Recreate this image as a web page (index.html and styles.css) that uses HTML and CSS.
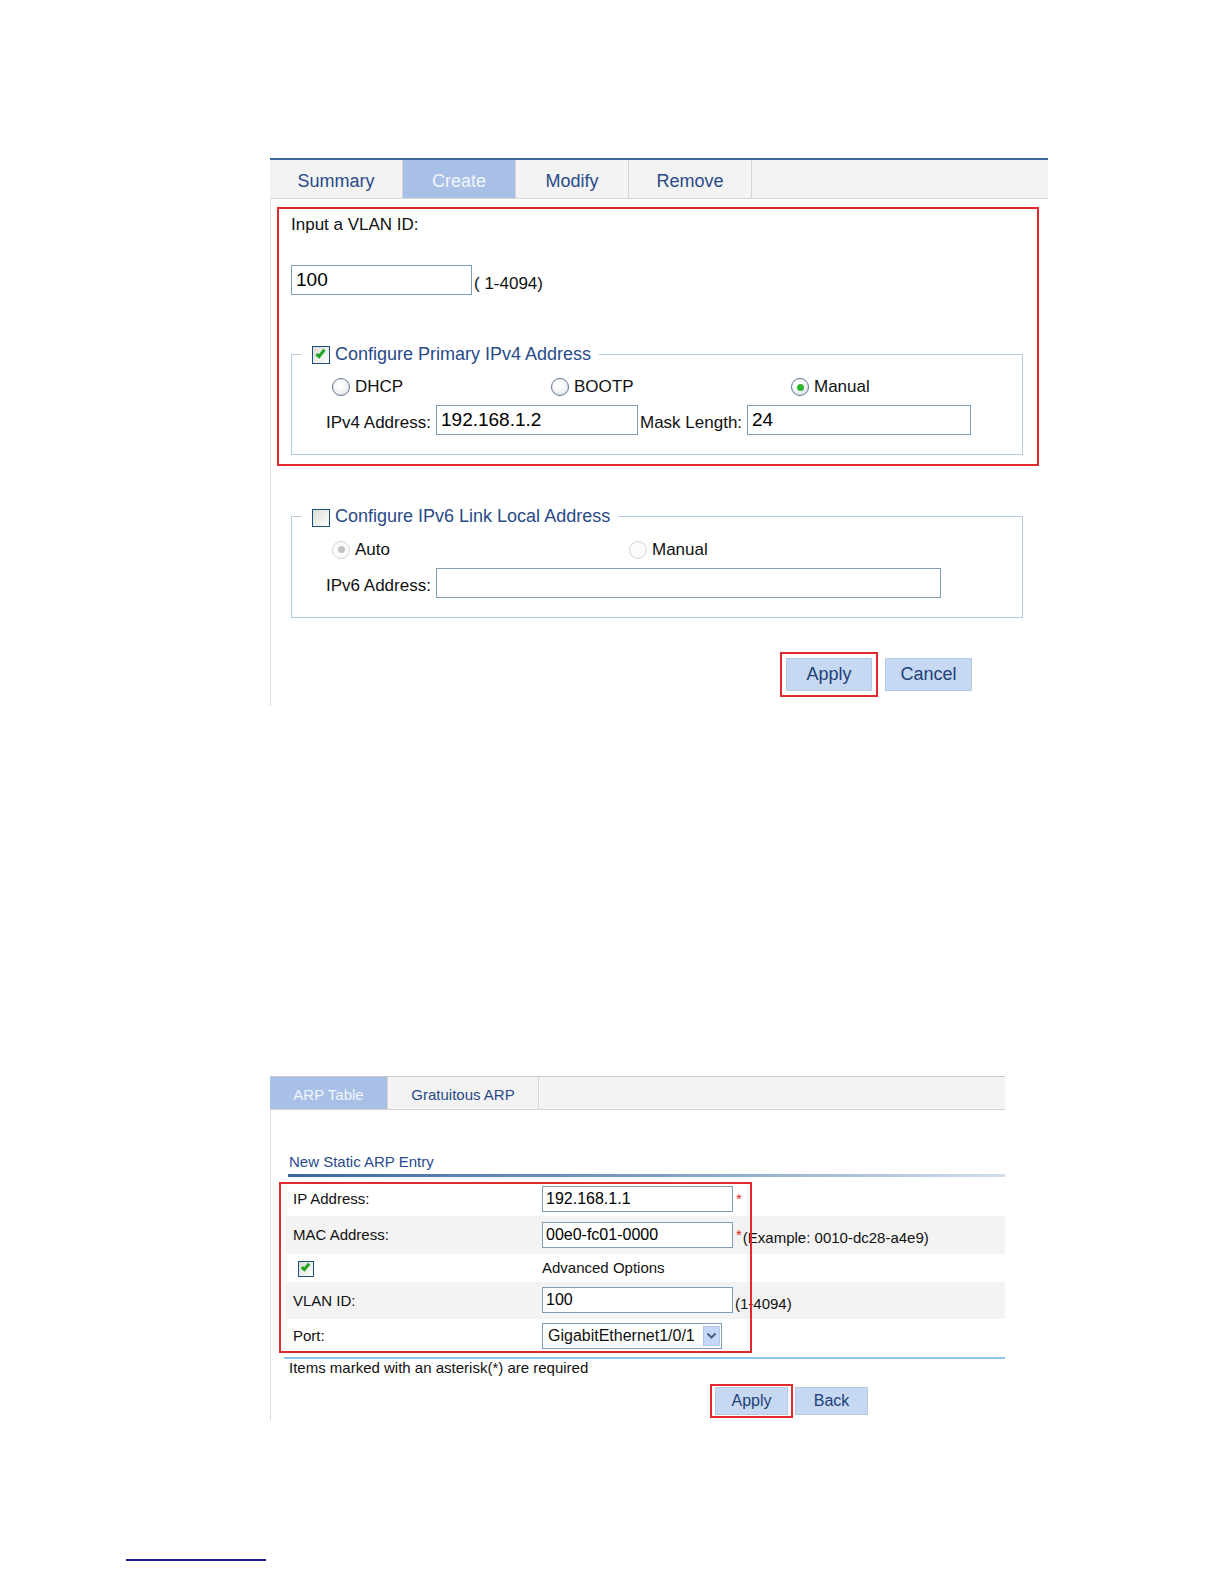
FILE: index.html
```html
<!DOCTYPE html>
<html lang="en">

<head>
    <meta charset="UTF-8">
    <title>VLAN / ARP configuration</title>
    <link rel="stylesheet" href="styles.css">
</head>

<body>
    <main class="page">
        <!-- VLAN create -->
        <section class="panel vlan">
            <nav class="tabs">
                <span class="tab" style="width:133px">Summary</span>
                <span class="tab active" style="width:113px">Create</span>
                <span class="tab" style="width:113px">Modify</span>
                <span class="tab" style="width:123px">Remove</span>
            </nav>
            <div class="panel-body">
                <div class="highlight">
                    <p class="prompt">Input a VLAN ID:</p>
                    <div class="id-row">
                        <span class="field" style="width:181px">100</span>
                        <span class="hint">( 1-4094)</span>
                    </div>
                    <fieldset class="group">
                        <legend><span class="check on"></span>Configure Primary IPv4 Address</legend>
                        <div class="radios v4">
                            <label class="radio"><span class="dot"></span>DHCP</label>
                            <label class="radio"><span class="dot"></span>BOOTP</label>
                            <label class="radio"><span class="dot on"></span>Manual</label>
                        </div>
                        <div class="addr-row">
                            <span class="label" style="width:110px">IPv4 Address:</span>
                            <span class="field" style="width:202px">192.168.1.2</span>
                            <span class="label mask" style="width:107px">Mask Length:</span>
                            <span class="field" style="width:224px">24</span>
                        </div>
                    </fieldset>
                </div>

                <fieldset class="group v6">
                    <legend><span class="check"></span>Configure IPv6 Link Local Address</legend>
                    <div class="radios v6">
                        <label class="radio"><span class="dot off on"></span>Auto</label>
                        <label class="radio"><span class="dot off"></span>Manual</label>
                    </div>
                    <div class="addr-row">
                        <span class="label" style="width:110px">IPv6 Address:</span>
                        <span class="field" style="width:505px"></span>
                    </div>
                </fieldset>

                <div class="actions">
                    <span class="mark"><button class="btn">Apply</button></span>
                    <button class="btn">Cancel</button>
                </div>
            </div>
        </section>

        <!-- static ARP -->
        <section class="panel arp">
            <nav class="tabs">
                <span class="tab active" style="width:118px">ARP Table</span>
                <span class="tab" style="width:151px">Gratuitous ARP</span>
            </nav>
            <div class="panel-body">
                <h3 class="caption">New Static ARP Entry</h3>
                <div class="caption-bar"></div>

                <div class="entry">
                    <div class="row" style="height:34px">
                        <span class="label">IP Address:</span>
                        <span class="value"><span class="field">192.168.1.1</span><span class="req">*</span></span>
                    </div>
                    <div class="row alt" style="height:38px">
                        <span class="label">MAC Address:</span>
                        <span class="value"><span class="field">00e0-fc01-0000</span><span class="req">*</span><span class="hint">(Example: 0010-dc28-a4e9)</span></span>
                    </div>
                    <div class="row" style="height:28px">
                        <span class="label"><span class="check small on"></span></span>
                        <span class="value">Advanced Options</span>
                    </div>
                    <div class="row alt" style="height:37px">
                        <span class="label">VLAN ID:</span>
                        <span class="value"><span class="field">100</span><span class="hint">(1-4094)</span></span>
                    </div>
                    <div class="row" style="height:34px">
                        <span class="label">Port:</span>
                        <span class="value">
                            <span class="select">GigabitEthernet1/0/1
                                <span class="arrow">
                                    <svg width="11" height="8" viewBox="0 0 11 8"><path d="M1.5 1.5 L5.5 5.5 L9.5 1.5" fill="none" stroke="#4b5f86" stroke-width="2"/></svg>
                                </span>
                            </span>
                        </span>
                    </div>
                    <div class="red-box"></div>
                </div>

                <div class="rule"></div>
                <p class="note">Items marked with an asterisk(*) are required</p>
                <div class="actions">
                    <span class="mark"><button class="btn">Apply</button></span>
                    <button class="btn">Back</button>
                </div>
            </div>
        </section>

        <div class="footnote-rule"></div>
    </main>
</body>

</html>
```

FILE: styles.css
```css
*,
*::after,
*::before {
    box-sizing: border-box;
}

body {
    font-family: "Liberation Sans", Arial, sans-serif;
    background: #fff;
    color: #111;
    margin: 0;
}

.page {
    padding-top: 158px;
}

.panel {
    margin-left: 270px;
}

/* tabs */
.tabs {
    display: flex;
    background: #f3f3f3;
    border-bottom: 1px solid #d5d5d5;

    .tab {
        display: flex;
        align-items: center;
        justify-content: center;
        border-right: 1px solid #d5d5d5;
        color: #284a88;
        padding-top: 5px;
    }
    .tab.active {
        background: #a8c0e6;
        color: #f2f6fc;
    }
}

.panel-body {
    display: flow-root;
    border-left: 1px solid #dcdcdc;
}

/* shared widgets */
.field {
    display: inline-flex;
    align-items: center;
    background: #fff;
    border: 1px solid #7f9db9;
    padding: 0 4px;
    color: #000;
}

.check {
    display: inline-block;
    width: 18px;
    height: 18px;
    border: 1px solid #1c4f7e;
    background: linear-gradient(135deg, #dcdcd6, #fdfdfd);
    vertical-align: middle;
    margin-right: 5px;
    position: relative;
    &.on::after {
        content: "";
        position: absolute;
        left: 5px;
        top: 1px;
        width: 5px;
        height: 10px;
        border: solid #21a521;
        border-width: 0 3px 3px 0;
        transform: rotate(40deg);
    }
    &.small {
        width: 16px;
        height: 16px;
        &.on::after {
            left: 4px;
            top: 0;
            width: 5px;
            height: 9px;
        }
    }
}

.radio {
    display: flex;
    align-items: center;
    gap: 5px;
    font-size: 17px;

    .dot {
        width: 18px;
        height: 18px;
        border-radius: 50%;
        border: 1px solid #5f7590;
        background: radial-gradient(circle at 40% 35%, #fff 20%, #dcdfe4 100%);
        display: flex;
        align-items: center;
        justify-content: center;
    }
    .dot.on::after {
        content: "";
        width: 7px;
        height: 7px;
        border-radius: 50%;
        background: #2fb52f;
    }
    .dot.off {
        border-color: #d4d4d4;
        background: #fbfbfb;
    }
    .dot.off.on::after {
        background: #c2c2c2;
    }
}

.btn {
    font-family: inherit;
    background: #c6d8f2;
    border: 1px solid #b6c9e3;
    color: #223f78;
    padding: 0;
    display: block;
}

.mark {
    display: block;
    border: 2px solid #e12a2e;
}

.hint {
    color: #111;
}

/* VLAN panel */
.vlan {
    width: 778px;

    .tabs {
        height: 41px;
        border-top: 2px solid #3a679b;
        font-size: 18px;
    }
    .panel-body {
        padding: 8px 0 9px 6px;
    }

    .highlight {
        width: 762px;
        border: 2px solid #e12a2e;
        padding: 6px 12px 9px 12px;
    }
    .prompt {
        margin: 0;
        font-size: 17px;
        line-height: 20px;
    }
    .id-row {
        display: flex;
        align-items: center;
        margin-top: 30px;
        font-size: 17px;
        .hint {
            padding-top: 8px;
            margin-left: 2px;
        }
    }
    .field {
        height: 30px;
        font-size: 19px;
    }

    .group {
        width: 732px;
        margin: 49px 0 0 0;
        padding: 0 0 19px 0;
        border: 1px solid #b5cbe0;
        min-width: 0;

        legend {
            margin-left: 9px;
            padding: 0 8px 0 11px;
            font-size: 18px;
            line-height: 20px;
            color: #284a88;
        }
    }
    .group.v6 {
        margin: 40px 0 0 14px;
    }

    .radios {
        display: grid;
        margin-top: 13px;
        padding-left: 40px;
        height: 20px;
        &.v4 {
            grid-template-columns: 219px 240px auto;
        }
        &.v6 {
            grid-template-columns: 297px auto;
        }
    }

    .addr-row {
        display: flex;
        align-items: center;
        margin-top: 8px;
        padding-left: 34px;
        .label {
            font-size: 17px;
            padding-top: 6px;
        }
        .mask {
            margin-left: 2px;
        }
    }

    .actions {
        display: flex;
        align-items: center;
        gap: 7px;
        margin: 34px 0 0 503px;
        .mark {
            padding: 4px;
        }
        .btn {
            width: 86px;
            height: 33px;
            font-size: 18px;
        }
        > .btn {
            width: 87px;
        }
    }
}

/* ARP panel */
.arp {
    width: 735px;
    margin-top: 370px;

    .tabs {
        height: 34px;
        border-top: 1px solid #c9c9c9;
        font-size: 15px;
        .tab {
            padding-top: 3px;
        }
    }
    .panel-body {
        padding: 0 0 3px 13px;
    }

    .caption {
        margin: 43px 0 0 0;
        padding-left: 5px;
        font-size: 15px;
        line-height: 18px;
        font-weight: normal;
        color: #2a4b8d;
    }
    .caption-bar {
        margin: 3px 0 0 4px;
        height: 3px;
        background: linear-gradient(90deg, #3d679f, #7d9cc4 50%, #d2deec);
    }

    .entry {
        position: relative;
        margin: 5px 0 0 2px;
        font-size: 15px;

        .row {
            display: grid;
            grid-template-columns: 256px 1fr;
            align-items: center;
        }
        .row.alt {
            background: #f3f3f3;
        }
        .label {
            padding-left: 7px;
            .check {
                margin-left: 5px;
            }
        }
        .value {
            display: flex;
            align-items: center;
        }
        .field {
            width: 191px;
            height: 26px;
            font-size: 16px;
            padding: 0 3px;
        }
        .req {
            color: #e0262a;
            margin: 0 1px 0 3px;
            align-self: flex-start;
            padding-top: 4px;
        }
        .hint {
            padding-top: 6px;
        }
        .field + .hint {
            margin-left: 2px;
        }

        .select {
            display: flex;
            align-items: center;
            justify-content: space-between;
            width: 180px;
            height: 26px;
            border: 1px solid #7f9db9;
            padding: 0 1px 0 5px;
            font-size: 16px;
            .arrow {
                width: 17px;
                height: 20px;
                display: flex;
                align-items: center;
                justify-content: center;
                background: #c6d7f8;
                border: 1px solid #b3c7ee;
            }
        }

        .red-box {
            position: absolute;
            left: -7px;
            top: 0;
            width: 473px;
            height: 171px;
            border: 2px solid #e12a2e;
            pointer-events: none;
        }
    }

    .rule {
        margin-top: 4px;
        height: 2px;
        background: #8ac6e6;
    }
    .note {
        margin: 0;
        padding-left: 5px;
        font-size: 15px;
        line-height: 18px;
    }

    .actions {
        display: flex;
        align-items: center;
        gap: 2px;
        margin: 7px 0 0 426px;
        .mark {
            padding: 1px 3px;
        }
        .btn {
            width: 73px;
            height: 28px;
            font-size: 16px;
        }
    }
}

.footnote-rule {
    margin: 138px 0 0 126px;
    width: 140px;
    height: 2px;
    background: #1b1b8f;
}
```
